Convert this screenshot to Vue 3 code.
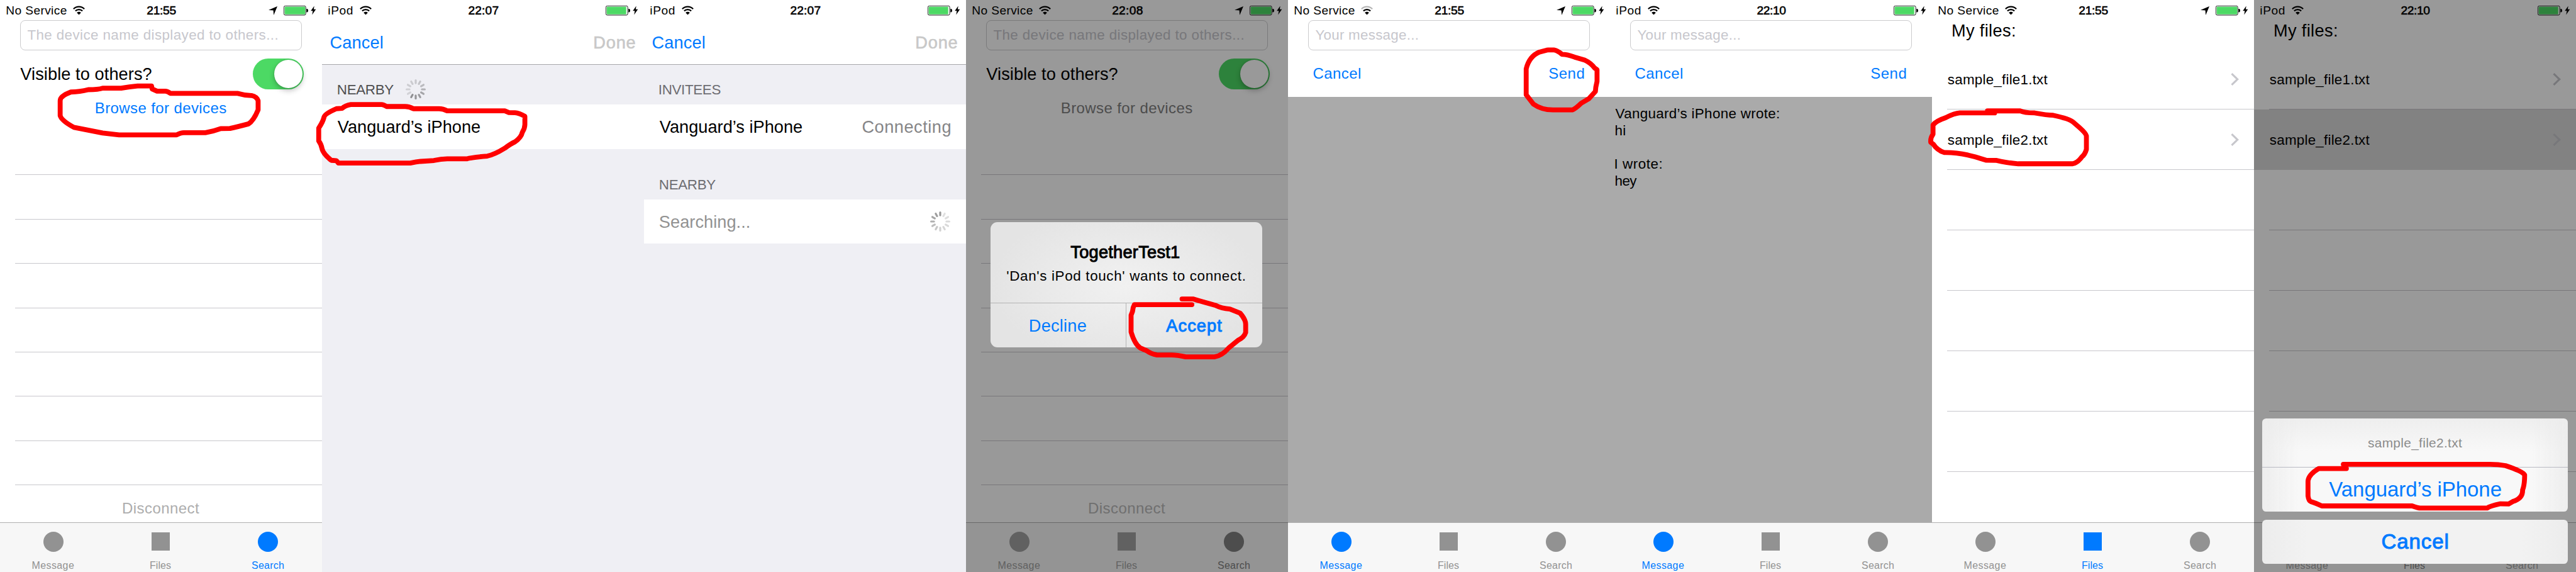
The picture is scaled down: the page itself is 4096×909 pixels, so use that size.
<script setup>
// Eight phone screens side by side, 320 x 568 pt each at 1.6 px per point.
const phones = [
  { kind: 'search', carrier: 'No Service', time: '21:55', arrow: true, tab: 'Search' },
  { kind: 'browser', carrier: 'iPod', time: '22:07' },
  { kind: 'invite', carrier: 'iPod', time: '22:07' },
  { kind: 'search', carrier: 'No Service', time: '22:08', arrow: true, tab: 'Search', dim: true, overlay: 'alert' },
  { kind: 'message', carrier: 'No Service', time: '21:55', arrow: true, weak: true, tab: 'Message' },
  { kind: 'message', carrier: 'iPod', time: '22:10', tab: 'Message', log: true },
  { kind: 'files', carrier: 'No Service', time: '21:55', arrow: true, tab: 'Files' },
  { kind: 'files', carrier: 'iPod', time: '22:10', tab: 'Files', dim: true, overlay: 'sheet' },
]
const carrierWidth = { 'No Service': 95.4, iPod: 38.5 }
const timeWidth = { '21:55': 46.2, '22:07': 48, '22:08': 48.5, '22:10': 45.8 }
const tabs = [
  { name: 'Message', width: 66.3 },
  { name: 'Files', width: 33 },
  { name: 'Search', width: 51 },
]
const log = [
  { text: 'Vanguard’s iPhone wrote:', width: 260.5 },
  { text: 'hi', width: 15.7 },
  { text: '', width: 0 },
  { text: 'I wrote:', width: 73.8 },
  { text: 'hey', width: 34.6 },
]
const spokes = [...Array(12).keys()]
// Opacity of a spinner spoke, fading counter-clockwise from the leading one.
const fade = (i, lead) => [0.4, 0.38, 0.35, 0.31, 0.26, 0.22, 0.18, 0.16, 0.15, 0.14, 0.13, 0.12][(lead - i + 12) % 12]

// Tracks a label so that its ink spans the given width, and trims its side bearings.
const ctx = document.createElement('canvas').getContext('2d')
const vFit = {
  mounted(el, { value }) {
    const n = el.textContent.length
    if (!value || n < 2) return
    const s = getComputedStyle(el)
    ctx.font = `${s.fontWeight} ${s.fontSize} "Liberation Sans"`
    const m = ctx.measureText(el.textContent)
    const ls = (value - m.actualBoundingBoxLeft - m.actualBoundingBoxRight) / (n - 1)
    el.style.letterSpacing = `${ls}px`
    el.style.marginLeft = `${m.actualBoundingBoxLeft}px`
    el.style.marginRight = `${m.actualBoundingBoxRight - m.width - ls}px`
  },
}
</script>

<template>
  <main class="board">
    <section v-for="(p, i) in phones" :key="i" class="phone" :class="[p.kind, { dim: p.dim }]">
      <header class="status">
        <div class="left">
          <span v-fit="carrierWidth[p.carrier]" class="t">{{ p.carrier }}</span>
          <svg class="wifi" viewBox="0 0 19 15">
            <path d="M0.9 5.2 A12.2 12.2 0 0 1 18.1 5.2" fill="none" :stroke="p.weak ? '#b5b5b5' : '#000'" stroke-width="2.3" />
            <path d="M3.9 8.4 A8 8 0 0 1 15.1 8.4" fill="none" stroke="#000" stroke-width="2.2" />
            <path d="M6.2 11.2 A4.7 4.7 0 0 1 12.8 11.2 L9.5 14.6 Z" fill="#000" />
          </svg>
        </div>
        <span v-fit="timeWidth[p.time]" class="t medium">{{ p.time }}</span>
        <div class="right">
          <svg v-if="p.arrow" class="arrow" viewBox="0 0 14 14">
            <path d="M14 0 L8.2 14 L7.6 6.6 L0 6 Z" fill="#000" />
          </svg>
          <svg class="battery" viewBox="0 0 40 16">
            <rect x="0.4" y="0.4" width="34.8" height="14.6" rx="2.2" fill="none" stroke="#000" stroke-width="0.9" />
            <rect x="1.7" y="1.7" :width="p.arrow ? 32.6 : 31" height="12" rx="0.8" fill="#4cd964" />
            <path d="M36.3 5 H37.6 Q39 5.6 39 7.7 Q39 9.8 37.6 10.4 H36.3 Z" fill="#000" />
          </svg>
          <svg class="bolt" viewBox="0 0 9 15">
            <path d="M6 0 L0.2 8.2 H3.6 L2.4 15 L8.8 5.6 H5.2 Z" fill="#000" />
          </svg>
        </div>
      </header>

      <template v-if="p.kind === 'search'">
        <div class="field"><span v-fit="398" class="t">The device name displayed to others...</span></div>
        <div class="visible">
          <span v-fit="209.3" class="t">Visible to others?</span>
          <div class="switch"><div class="knob"></div></div>
        </div>
        <div class="browse"><span v-fit="208.3" class="t">Browse for devices</span></div>
        <ul class="list"><li v-for="n in 8" :key="n"></li></ul>
        <div class="disconnect"><span v-fit="121.8" class="t">Disconnect</span></div>
      </template>

      <template v-else-if="p.kind === 'browser' || p.kind === 'invite'">
        <nav class="nav">
          <span v-fit="83.3" class="t">Cancel</span>
          <span v-fit="64.3" class="t medium done">Done</span>
        </nav>
        <h3 class="group first">
          <span v-if="p.kind === 'invite'" v-fit="96.6" class="t">INVITEES</span>
          <span v-else v-fit="89.5" class="t">NEARBY</span>
          <svg v-if="p.kind === 'browser'" class="spinner" viewBox="-16 -16 32 32">
            <rect v-for="s in spokes" :key="s" x="-1.6" y="-16" width="3.2" height="7.7" rx="1.6"
              :transform="`rotate(${s * 30})`" :fill-opacity="fade(s, 7)" />
          </svg>
        </h3>
        <div class="cell">
          <span v-fit="226.3" class="t">Vanguard’s iPhone</span>
          <span v-if="p.kind === 'invite'" v-fit="140" class="t detail">Connecting</span>
        </div>
        <template v-if="p.kind === 'invite'">
          <h3 class="group"><span v-fit="89.5" class="t">NEARBY</span></h3>
          <div class="cell">
            <span v-fit="143" class="t searching">Searching...</span>
            <svg class="spinner" viewBox="-16 -16 32 32">
              <rect v-for="s in spokes" :key="s" x="-1.6" y="-16" width="3.2" height="7.7" rx="1.6"
                :transform="`rotate(${s * 30})`" :fill-opacity="fade(s, 0)" />
            </svg>
          </div>
        </template>
      </template>

      <template v-else-if="p.kind === 'message'">
        <div class="field"><span v-fit="163.3" class="t">Your message...</span></div>
        <div class="actions">
          <span v-fit="74.4" class="t">Cancel</span>
          <span v-fit="55.2" class="t">Send</span>
        </div>
        <div class="log">
          <template v-if="p.log">
            <p v-for="(l, n) in log" :key="n"><span v-fit="l.width" class="t">{{ l.text }}</span></p>
          </template>
        </div>
      </template>

      <template v-else>
        <div class="title"><span v-fit="98.9" class="t">My files:</span></div>
        <ul class="files">
          <li v-for="n in 7" :key="n" :class="{ picked: p.dim && n === 2 }">
            <template v-if="n < 3">
              <span v-fit="159.7" class="t">{{ `sample_file${n}.txt` }}</span>
              <svg class="chevron" viewBox="0 0 13 20">
                <path d="M1.5 1.2 L10.8 10 L1.5 18.8" fill="none" stroke="#c7c7cc" stroke-width="3.1" />
              </svg>
            </template>
          </li>
        </ul>
      </template>

      <footer v-if="p.tab" class="tabs">
        <div v-for="t in tabs" :key="t.name" class="tab" :class="{ on: t.name === p.tab }">
          <div class="shape" :class="{ square: t.name === 'Files' }"></div>
          <span v-fit="t.width" class="t">{{ t.name }}</span>
        </div>
      </footer>

      <div v-if="p.overlay" class="shade" :class="p.overlay + '-shade'">
        <div v-if="p.overlay === 'alert'" class="alert">
          <div class="alert-title"><span v-fit="172.7" class="t heavy">TogetherTest1</span></div>
          <div class="alert-text"><span v-fit="378.4" class="t">'Dan's iPod touch' wants to connect.</span></div>
          <div class="alert-buttons">
            <div><span v-fit="88.8" class="t">Decline</span></div>
            <div><span v-fit="88.8" class="t heavy">Accept</span></div>
          </div>
        </div>
        <template v-else>
          <div class="sheet">
            <div class="sheet-title"><span v-fit="149.9" class="t">sample_file2.txt</span></div>
            <div class="sheet-option"><span v-fit="273.3" class="t">Vanguard’s iPhone</span></div>
          </div>
          <div class="sheet-cancel"><span v-fit="105.1" class="t heavy">Cancel</span></div>
        </template>
      </div>
    </section>

    <!-- Hand-drawn marker loops -->
    <svg class="marker" viewBox="0 0 4096 909">
      <path transform="scale(.3265 .2908)" d="M738 470 H670 Q630 474 590 482 H500 Q480 490 430 490 Q390 502 345 503 Q293 525 293 550 V632 Q300 660 360 696 L500 727 L580 737 H860 Q880 725 895 725 H1000 Q1040 718 1075 703 L1120 702 Q1160 692 1210 677 Q1235 660 1257 600 V550 Q1250 528 1225 522 Q1190 522 1155 510 H830 Q815 498 805 498 H765 L741 486 Z" />
      <path transform="translate(512) scale(.3265 .2908)" d="M988 636 Q960 617 940 616 L910 615 L890 606 H610 Q590 594 570 594 H445 Q425 582 405 582 H315 Q300 571 290 571 H140 Q115 575 98 592 L70 594 Q12 622 10 640 Q5 665 -16 700 V770 Q-3 790 0 812 Q5 840 45 876 L70 878 L80 891 H430 Q460 885 480 882 L545 877 Q580 868 610 868 H705 Q730 860 805 853 Q840 845 890 810 Q920 785 940 775 Q970 752 976 722 Q988 700 988 680 Z" />
      <path transform="translate(1536 320) scale(.3265 .3755)" d="M1052 413 H1105 Q1150 425 1215 440 Q1245 453 1285 456 L1335 473 Q1362 500 1362 520 V555 Q1355 575 1325 588 L1280 620 Q1245 655 1210 658 H1070 Q1030 650 1000 650 H930 Q900 645 880 632 L848 620 Q822 605 804 553 V482 Q813 465 814 450 L820 437 H1100" />
      <path transform="translate(2048) scale(.3265 .26667)" d="M1260 299 L1225 310 Q1175 335 1160 410 V565 L1195 620 Q1235 655 1290 655 H1385 Q1400 648 1428 615 L1465 588 L1497 545 L1499 520 L1505 485 V415 L1493 405 Q1475 375 1445 358 L1395 340 Q1355 323 1335 324 Q1310 300 1295 298 H1268 Z" />
      <path transform="translate(3072) scale(.3265 .26667)" d="M270 661 H430 Q450 673 500 673 Q560 686 590 687 Q670 708 687 727 L718 760 Q750 795 752 810 V890 Q745 920 730 935 Q710 970 685 976 H420 Q360 970 315 956 L265 955 L210 935 L175 924 Q115 908 60 909 Q25 895 7 860 L-6 848 Q-8 820 5 800 V745 Q20 720 65 702 Q110 675 135 673 H305" />
      <path transform="translate(3584 624) scale(.3265 .26667)" d="M450 452 H315 Q263 490 263 530 V615 Q266 645 278 650 Q300 658 330 675 H770 Q800 688 810 688 H1135 Q1150 675 1200 662 L1240 663 L1260 649 Q1310 630 1308 580 Q1318 550 1318 490 Q1310 470 1225 435 Q1190 427 1150 427 H435" />
    </svg>
  </main>
</template>

<style>
html, body { margin: 0; overflow: hidden; background: #fff; }
</style>

<style scoped>
.board {
  position: relative; display: flex; width: 4096px; height: 909px; overflow: hidden;
  font-family: "Liberation Sans", Arial, sans-serif; font-size: 24px; line-height: 1.117;
  font-variant-ligatures: none; color: #000;
}
.phone { position: relative; display: flex; flex-direction: column; width: 512px; height: 909px; flex: none; background: #fff; overflow: hidden; }
.phone > * { box-sizing: border-box; flex: none; }
ul { list-style: none; margin: 0; padding: 0; }
li { box-sizing: border-box; }
p, h3 { margin: 0; font-weight: 400; }
svg { display: block; flex: none; }
.t { display: inline-block; padding-top: 1.6px; white-space: pre; }
.medium { -webkit-text-stroke: 0.6px currentColor; }
.heavy { -webkit-text-stroke: 1px currentColor; }

.status { display: grid; grid-template-columns: 1fr auto 1fr; align-items: center; height: 32px; padding: 0 9.5px 0 10.3px; font-size: 19.2px; }
.left { display: flex; align-items: center; gap: 10.7px; }
.right { display: flex; align-items: center; justify-content: flex-end; }
.wifi { width: 19px; height: 15px; }
.arrow { width: 14px; height: 14px; margin: 1px 9.8px 0 0; }
.battery { width: 40px; height: 16px; margin: 1px 3px 0 0; }
.bolt { width: 8.5px; height: 15px; }

.field { display: flex; align-items: center; height: 48px; margin: 0 32px; padding: 0 0 2px 10.4px; border: 1px solid #cbcbcd; border-radius: 8px; font-size: 22.4px; color: #c7c7cd; }
.visible { display: flex; align-items: center; justify-content: space-between; height: 75px; padding: 0 28.7px 0 32.3px; font-size: 27.2px; }
.switch { display: flex; align-items: center; justify-content: flex-end; width: 81.6px; height: 49.6px; border-radius: 25px; background: #4cd964; }
.knob { width: 44.8px; height: 44.8px; margin-right: 2.3px; border-radius: 50%; background: #fff; box-shadow: 0 4px 8px rgba(0, 0, 0, .25), 0 0 2px rgba(0, 0, 0, .25); }
.browse { display: flex; align-items: center; justify-content: center; height: 33px; margin-bottom: 20px; color: #007aff; }
.list { padding-left: 24px; }
.list li { height: 70.4px; border-bottom: 1px solid #c8c7cc; }
.phone > .disconnect { display: flex; align-items: center; justify-content: center; flex: 1; padding-top: 15px; color: #adadad; }

.nav { display: flex; align-items: center; justify-content: space-between; height: 71px; padding: 0 14.4px 0 13.4px; border-bottom: 1px solid #a7a7aa; font-size: 27.2px; color: #007aff; }
.done { color: #c8c8c8; }
.browser, .invite { background: #efeff4; }
.browser .status, .invite .status, .nav { background: #fff; }
.group { display: flex; align-items: center; gap: 18.6px; height: 80px; padding: 31px 0 0 24.8px; font-size: 22.4px; color: #6d6d72; }
.group.first { height: 63.4px; padding-top: 15px; }
.browser .group { color: #4f4f51; }
.spinner { width: 32px; height: 32px; }
.cell { display: flex; align-items: center; justify-content: space-between; height: 70.4px; padding: 0 24.6px 0 24.8px; font-size: 27.2px; background: #fff; }
.detail { color: #858587; }
.searching { color: #929292; }

.actions { display: flex; align-items: center; justify-content: space-between; height: 73.6px; padding: 0 41.6px 0 40.5px; color: #007aff; }
.phone > .log { flex: 1; padding: 12.9px 0 0 8.6px; background: #aaa; font-size: 22.4px; line-height: 26.8px; }
.log p { height: 26.8px; }

.title { height: 46.4px; padding: 0.4px 0 0 33px; font-size: 27.2px; }
.phone > .files { flex: 1; }
.files li { display: flex; align-items: center; justify-content: space-between; height: 96px; margin-left: 24px; padding: 0 24.4px 0 .8px; border-bottom: 1px solid #c8c7cc; font-size: 22.4px; }
.files .picked { margin-left: 0; padding-left: 24.8px; background: #d9d9d9; border-color: #d9d9d9; }
.chevron { width: 13px; height: 20px; }

.tabs { display: grid; grid-template-columns: 169.5px 172px 168px; height: 79px; background: #f7f7f7; border-top: 1px solid #b0b0b0; font-size: 16px; color: #929292; }
.tab { display: flex; flex-direction: column; align-items: center; gap: 11.2px; padding-top: 13.8px; line-height: 18px; }
.shape { flex: none; width: 32px; height: 32px; border-radius: 50%; background: currentColor; }
.shape.square { width: 28.8px; height: 28.8px; margin: 1.6px 0; border-radius: 0; }
.tab.on { color: #007aff; }
.dim .tab { color: #a2a2a2; }
.dim .browse, .dim .tab.on { color: #808080; }
.phone.dim > .disconnect { color: #bababa; }

.shade { position: absolute; inset: 0; display: flex; flex-direction: column; align-items: center; background: rgba(0, 0, 0, .4); }
.alert-shade { padding-top: 353.4px; }
.alert { display: flex; flex-direction: column; width: 432px; height: 198.8px; margin-right: 3px; border-radius: 11px; background: radial-gradient(ellipse 215px 125px at 50% 50%, #f1f1f1, #e4e4e4); overflow: hidden; }
.alert-title { display: flex; align-items: center; justify-content: center; height: 40px; padding: 26.6px 3.6px 0 0; font-size: 27.2px; }
.alert-text { display: flex; align-items: center; justify-content: center; height: 35px; font-size: 22.4px; }
.alert-buttons { display: flex; box-sizing: border-box; height: 70.8px; margin-top: auto; border-top: 1px solid #b3b3b3; font-size: 27.2px; color: #007aff; }
.alert-buttons div { flex: 1; display: flex; align-items: center; justify-content: center; }
.alert-buttons div:first-child { border-right: 1px solid #b3b3b3; }

.sheet-shade { padding-top: 664.8px; }
.sheet, .sheet-cancel { width: 486.4px; border-radius: 6.4px; overflow: hidden; color: #007aff; font-size: 33px; }
.sheet { height: 148px; background: linear-gradient(90deg, rgba(236, 236, 236, .9), rgba(248, 248, 248, 0) 12%, rgba(248, 248, 248, 0) 88%, rgba(236, 236, 236, .9)), linear-gradient(#eee, #f8f8f8 35%); }
.sheet-title { display: flex; align-items: center; justify-content: center; box-sizing: border-box; height: 78.2px; padding-bottom: 2px; border-bottom: 1px solid #b9bac3; font-size: 20.8px; color: #8b8b8b; }
.sheet-option, .sheet-cancel { display: flex; align-items: center; justify-content: center; height: 69.8px; }
.sheet-cancel { height: 70.4px; margin-top: 12.8px; background: linear-gradient(90deg, #ececec, #f2f2f2 15%, #f2f2f2 85%, #ececec); }

.marker { position: absolute; inset: 0; width: 4096px; height: 909px; }
.marker path { fill: none; stroke: #f00; stroke-width: 7.8px; stroke-linecap: round; stroke-linejoin: round; vector-effect: non-scaling-stroke; }
</style>
